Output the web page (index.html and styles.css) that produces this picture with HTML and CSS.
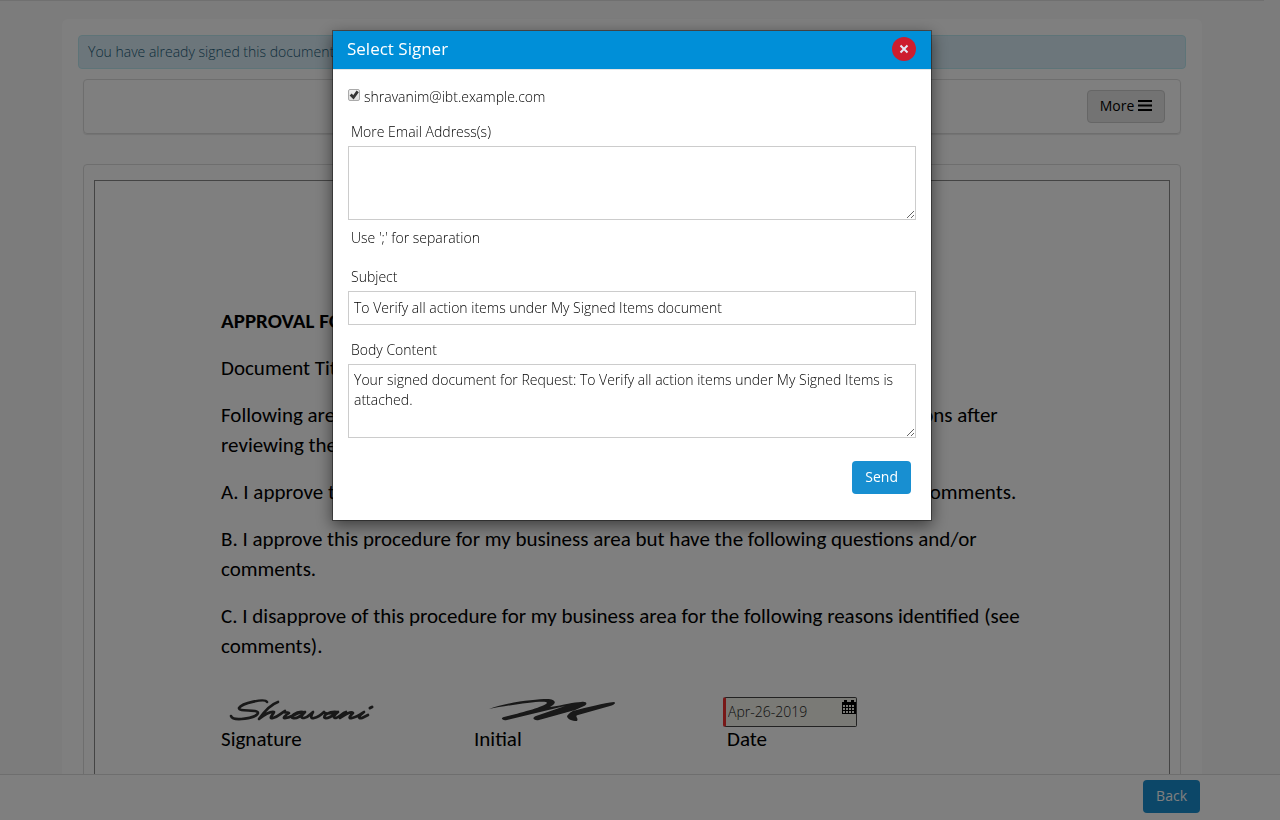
FILE: index.html
```html
<!DOCTYPE html>
<html lang="en">
<head>
<meta charset="utf-8">
<meta name="viewport" content="width=device-width, initial-scale=1">
<title>Select Signer</title>
<link rel="stylesheet" href="styles.css">
</head>
<body>
<div class="page">
<main class="container">
  <div class="alert">You have already signed this document.</div>
  <div class="toolbar">
    <button type="button" class="btn btn-default">More
      <svg class="bars" viewBox="0 0 14 11" aria-hidden="true"><path d="M0 1h14M0 5.500h14M0 10h14"/></svg>
    </button>
  </div>
  <section class="viewer">
    <article class="sheet">
      <h1>APPROVAL FORM</h1>
      <p>Document Title:</p>
      <p>Following are my approval/disapproval decisions, along with comments and questions after reviewing the document.</p>
      <p>A. I approve this procedure for my business area and have no further questions or comments.</p>
      <p>B. I approve this procedure for my business area but have the following questions and/or comments.</p>
      <p>C. I disapprove of this procedure for my business area for the following reasons identified (see comments).</p>
      <div class="signatures">
        <div class="sign">
          <svg class="ink" viewBox="0 0 150 30" role="img" aria-label="Handwritten signature">
            <path d="M41 5C39 1 16 6 13 11C12 15 32 12 32 16C31 21 7 25 5 19" stroke-width="2.600"/>
            <path d="M52 5C46 7 38 15 33 22C38 18 44 14 48 15C47 18 42 22 47 21C52 20 55 16 59 14C56 16 60 15 63 16C60 18 55 22 60 21C66 20 68 17 77 15C70 14 63 20 67 21C71 22 77 17 79 15C75 19 74 21 78 21C83 20 84 17 87 15C84 20 85 22 88 21C93 20 96 17 98 15C99 17 103 17 111 15C103 14 96 19 99 21C103 22 109 17 112 15C107 19 107 21 110 21C114 20 116 16 120 15L114 21C120 17 125 14 127 16C125 18 121 22 126 21C131 20 135 17 138 15C133 19 131 22 136 21L142 18" stroke-width="2.700"/>
            <path d="M144 11L146 10" stroke-width="3"/>
          </svg>
          <span>Signature</span>
        </div>
        <div class="sign">
          <svg class="ink" viewBox="0 0 150 30" role="img" aria-label="Handwritten initial">
            <path class="fill" d="M3 12C22 5 50 2 61 2C68 2 71 5 67 8L64 10C78 8 88 5 95 5C101 4 102 7 98 9L87 14C102 10 118 6 128 5C131 6 127 8 124 9L92 18C88 19 93 21 91 24C86 24 81 22 81 19C83 16 86 14 89 13L53 23C48 24 45 21 50 19L79 9L21 23C16 24 14 21 18 20C34 16 58 10 61 6C62 2 24 8 3 12Z"/>
          </svg>
          <span>Initial</span>
        </div>
        <div class="sign">
          <div class="datebox">
            <input type="text" id="date" value="Apr-26-2019">
            <svg class="calendar" viewBox="0 0 14 14" aria-hidden="true"><path fill="#000" d="M0 2h2V0h3v2h4V0h3v2h2v12H0z"/><path class="cells" d="M1 6h12M1 9h12M1 12h12"/></svg>
          </div>
          <label for="date">Date</label>
        </div>
      </div>
    </article>
  </section>
</main>
</div>
<footer class="footer"><div class="footer-inner"><button type="button" class="btn btn-primary">Back</button></div></footer>

<div class="backdrop">
  <form class="modal" role="dialog" aria-modal="true" aria-labelledby="modal-title">
    <header class="modal-header">
      <h2 id="modal-title">Select Signer</h2>
      <button type="button" class="close" aria-label="Close"><svg viewBox="0 0 10 10" aria-hidden="true"><path d="M1.500 1.500l7 7M8.500 1.500l-7 7"/></svg></button>
    </header>
    <div class="modal-body">
      <label class="check"><input type="checkbox" checked> shravanim@ibt.example.com</label>
      <div class="field">
        <label for="emails">More Email Address(s)</label>
        <textarea id="emails"></textarea>
        <p class="hint">Use ';' for separation</p>
      </div>
      <div class="field">
        <label for="subject">Subject</label>
        <input type="text" id="subject" value="To Verify all action items under My Signed Items document">
      </div>
      <div class="field">
        <label for="body">Body Content</label>
        <textarea id="body">Your signed document for Request: To Verify all action items under My Signed Items is attached.</textarea>
      </div>
      <div class="actions"><button type="submit" class="btn btn-primary">Send</button></div>
    </div>
  </form>
</div>
</body>
</html>
```
FILE: styles.css
```css
* { box-sizing: border-box; }
body {
  display: flex;
  flex-direction: column;
  height: 100vh;
  margin: 0;
  overflow: hidden;
  background: #f8f8f8;
  color: #000;
  font: 300 14px/20px "Open Sans", "Noto Sans", sans-serif;
}
button, input, textarea { font: inherit; color: inherit; }
.page {
  flex: 1;
  min-height: 0;
  margin-right: 16px;
  overflow: hidden;
  border-top: 1px solid #e0e0e0;
}
.container {
  max-width: 1140px;
  margin: 18px auto 0;
  padding: 16px 16px 20px;
  background: #fff;
  border-radius: 6px;
}
.alert {
  padding: 6px 9px;
  border: 1px solid #bce8f1;
  border-radius: 4px;
  background: #d9edf7;
  color: #205a78;
}
.toolbar {
  display: flex;
  justify-content: flex-end;
  margin: 10px 5px 30px;
  padding: 10px 15px;
  border: 1px solid #ddd;
  border-radius: 4px;
  box-shadow: 0 1px 1px rgba(0, 0, 0, .1);
}
.btn {
  padding: 4px 12px 6px;
  border: 1px solid transparent;
  border-radius: 4px;
  font-weight: 400;
  line-height: 21px;
}
.btn-default { background: #e6e6e6; border-color: #ccc; }
.btn-primary { background: #188fd1; color: #fff; }
.bars { width: 14px; height: 11px; stroke: #000; stroke-width: 2; }
.viewer {
  margin: 0 5px;
  padding: 15px 10px;
  border: 1px solid #ddd;
  border-radius: 4px;
}
.sheet {
  padding: 125px 130px 120px 126px;
  border: 1px solid #888;
  font: 400 21px/30px Carlito, Lato, sans-serif;
}
.sheet h1 { margin: 0 0 17px; font-size: 21px; line-height: 30px; }
.sheet p { margin: 0 0 17px; }
.signatures {
  display: grid;
  grid-template-columns: 253px 253px 1fr;
  margin-top: 36px;
  line-height: 24px;
}
.sign { display: flex; flex-direction: column; align-items: flex-start; }
.ink {
  width: 150px;
  height: 30px;
  margin-left: 5px;
  fill: none;
  stroke: #333;
  stroke-linecap: round;
  stroke-linejoin: round;
}
.ink .fill { fill: #333; stroke: none; }
.sign:nth-child(2) .ink { margin-left: 12px; }
.datebox {
  display: flex;
  width: 134px;
  height: 30px;
  margin-left: -4px;
  border: 1px solid #444;
  border-left: 3px solid #f03030;
  border-radius: 2px;
  background: #f4f4ec;
}
.datebox input {
  flex: 1;
  min-width: 0;
  padding: 0 2px;
  border: 0;
  background: none;
  color: #222;
  font: 300 14px/20px "Open Sans", sans-serif;
}
.calendar { width: 14px; height: 14px; margin-top: 2px; }
.cells { fill: none; stroke: #f4f4ec; stroke-width: 2; stroke-dasharray: 2 1; }
.footer {
  padding: 5px 16px 7px 0;
  border-top: 1px solid #ddd;
  background: #fff;
}
.footer-inner {
  display: flex;
  justify-content: flex-end;
  max-width: 1136px;
  margin: 0 auto;
}
.backdrop {
  position: fixed;
  inset: 0;
  padding: 30px 16px 0 0;
  background: rgba(0, 0, 0, .5);
}
.modal {
  max-width: 600px;
  margin: 0 auto;
  border: 1px solid rgba(0, 0, 0, .4);
  background: #fff;
  background-clip: padding-box;
  box-shadow: 0 5px 15px rgba(0, 0, 0, .5);
}
.modal-header {
  display: flex;
  align-items: center;
  justify-content: space-between;
  padding: 6px 15px 8px 14px;
  border-bottom: 1px solid #e5e5e5;
  background: #008fd8;
  background-clip: padding-box;
  color: #fff;
}
.modal-header h2 { margin: 0; font-size: 17px; line-height: 24px; font-weight: 400; }
.close {
  display: grid;
  place-items: center;
  width: 24px;
  height: 24px;
  padding: 0;
  border: 0;
  border-radius: 50%;
  background: #cd1d2e;
}
.close svg { width: 10px; height: 10px; fill: none; stroke: #e3e8f5; stroke-width: 2; }
.modal-body { padding: 17px 15px 26px; }
.check { display: flex; gap: 4px; margin-bottom: 15px; }
.check input {
  appearance: none;
  width: 12px;
  height: 12px;
  margin: 2px 0 0;
  border: 1px solid #aaa;
  border-radius: 2px;
  background: linear-gradient(#eee, #ddd);
}
.check input:checked::before {
  content: "";
  display: block;
  height: 10px;
  background: #333;
  clip-path: polygon(6% 55%, 28% 36%, 42% 52%, 76% 4%, 98% 22%, 46% 94%);
}
.field { margin-bottom: 15px; }
.field label { display: block; padding: 0 3px; margin-bottom: 4px; }
.field input, .field textarea {
  display: block;
  width: 100%;
  padding: 6px 5px;
  border: 1px solid #ccc;
  border-radius: 0;
  background: #fff;
}
.field textarea { height: 74px; padding-top: 5px; resize: vertical; }
.hint { margin: 8px 3px 19px; }
.actions { display: flex; justify-content: flex-end; padding: 8px 5px 0; }
```
